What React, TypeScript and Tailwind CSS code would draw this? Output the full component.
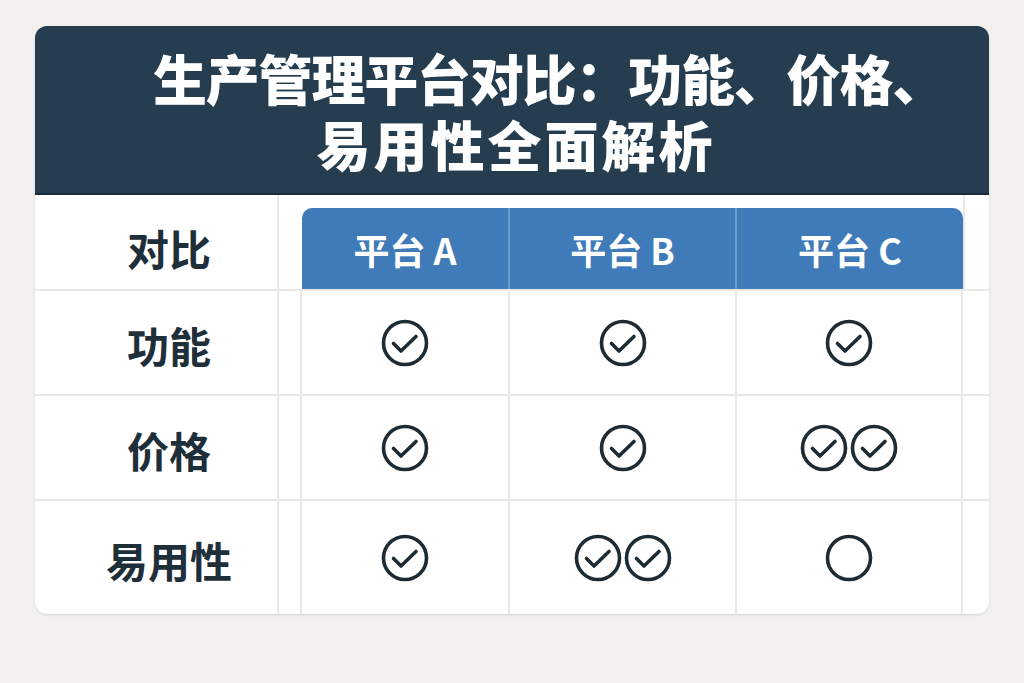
import React from 'react';

const Check = ({ empty = false }: { empty?: boolean }) => (
  <svg width="48" height="48" viewBox="0 0 48 48" fill="none" stroke="#1d2b35" strokeWidth="3.6" strokeLinecap="round" strokeLinejoin="round">
    <circle cx="24" cy="24" r="21.5" />
    {!empty && <path d="M12.5 24.5 L20 32 L35 17.5" />}
  </svg>
);

type Mark = 'one' | 'two' | 'none';

const rows: { label: string; marks: Mark[] }[] = [
  { label: '功能', marks: ['one', 'one', 'one'] },
  { label: '价格', marks: ['one', 'one', 'two'] },
  { label: '易用性', marks: ['one', 'two', 'none'] },
];

const Cell = ({ mark }: { mark: Mark }) => (
  <div className="flex items-center justify-center border-r-2 border-[#ebe9e6]">
    {mark === 'one' && <Check />}
    {mark === 'none' && <Check empty />}
    {mark === 'two' && (
      <div className="flex gap-[2px]">
        <Check />
        <Check />
      </div>
    )}
  </div>
);

export default function App() {
  const font = { fontFamily: '"Noto Sans CJK SC", "Noto Sans", sans-serif' };
  return (
    <div className="w-[1024px] h-[683px] bg-[#f2f1ee] pt-[26px] pl-[35px]" style={font}>
      <div className="w-[954px] h-[588px] bg-white rounded-xl overflow-hidden shadow-sm flex flex-col">
        <div className="h-[169px] bg-[#253d4f] border-b-2 border-[#1a2c3a] flex flex-col items-center justify-center text-white font-black text-[54px] leading-[66px] pt-[2px]">
          <div className="pl-[74px] tracking-[-1.2px]">生产管理平台对比：功能、价格、</div>
          <div className="pl-[8px] tracking-[3px]">易用性全面解析</div>
        </div>

        <div className="grid grid-cols-[244px_23px_208px_227px_226px_26px] grid-rows-[96px_105px_105px_1fr] flex-1 text-[#1f2f3a]">
          {/* header row */}
          <div className="flex items-center justify-center pl-[26px] pt-[10px] border-r-2 border-b-2 border-[#ebe9e6] font-bold text-[42px]">
            对比
          </div>
          <div className="border-b-2 border-[#ebe9e6]" />
          <div className="col-span-3 border-b-2 border-[#ebe9e6] pt-[13px]">
            <div className="h-full bg-[#3f7bb9] rounded-t-[10px] grid grid-cols-[208px_227px_226px] text-white font-bold text-[36px]">
              <div className="flex items-center justify-center border-r-2 border-[#6d9bcc]">平台 A</div>
              <div className="flex items-center justify-center border-r-2 border-[#6d9bcc]">平台 B</div>
              <div className="flex items-center justify-center">平台 C</div>
            </div>
          </div>
          <div className="border-b-2 border-l-2 border-[#ebe9e6]" />

          {rows.map((r, i) => (
            <React.Fragment key={r.label}>
              <div className={`flex items-center justify-center pl-[26px] pt-[4px] border-r-2 border-[#ebe9e6] font-bold text-[42px] ${i < 2 ? 'border-b-2' : ''}`}>
                {r.label}
              </div>
              <div className={`border-r-2 border-[#ebe9e6] ${i < 2 ? 'border-b-2' : ''}`} />
              {r.marks.map((m, j) => (
                <div key={j} className={`grid border-[#ebe9e6] ${i < 2 ? 'border-b-2' : ''}`}>
                  <Cell mark={m} />
                </div>
              ))}
              <div className={`border-[#ebe9e6] ${i < 2 ? 'border-b-2' : ''}`} />
            </React.Fragment>
          ))}
        </div>
      </div>
    </div>
  );
}
